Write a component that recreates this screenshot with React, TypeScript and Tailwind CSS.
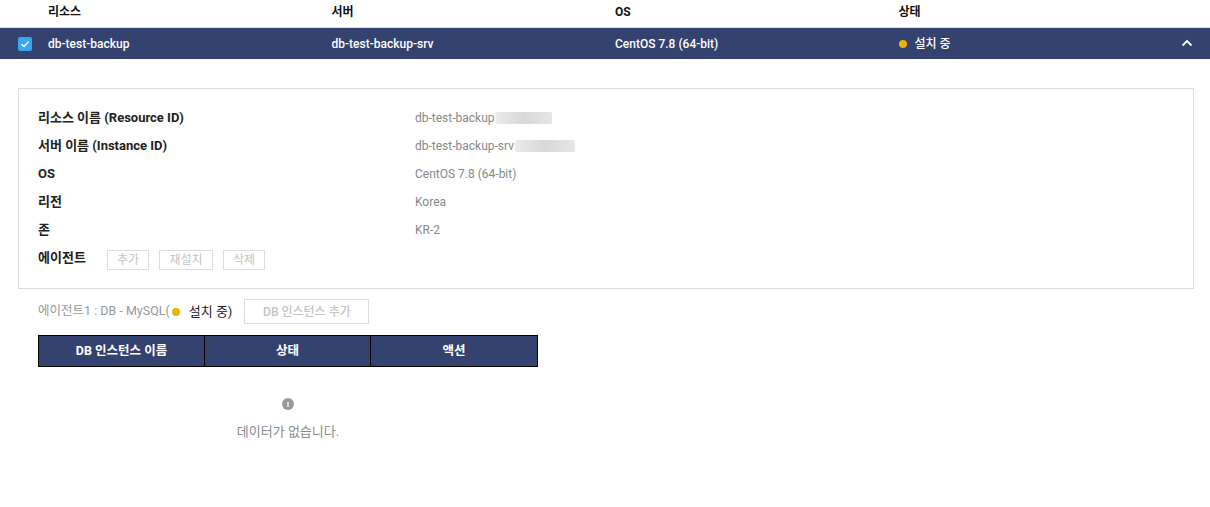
import React from 'react';

const font = { fontFamily: 'Roboto, "Noto Sans CJK KR", sans-serif' };

const details = [
  { label: '리소스 이름 (Resource ID)', value: 'db-test-backup', blur: 'w-[56px]' },
  { label: '서버 이름 (Instance ID)', value: 'db-test-backup-srv', blur: 'w-[60px]' },
  { label: 'OS', value: 'CentOS 7.8 (64-bit)' },
  { label: '리전', value: 'Korea' },
  { label: '존', value: 'KR-2' },
];

const Blurred: React.FC<{ w: string }> = ({ w }) => (
  <span className={`inline-block h-[12px] ${w} ml-[1px] rounded-[2px] bg-gradient-to-r from-[#eceaea] via-[#d9d7d9] to-[#e7e5e7] align-middle`} />
);

export default function App() {
  return (
    <div className="w-[1210px] h-[507px] bg-white text-[13px] text-[#222]" style={font}>
      <div className="h-[28px] border-b border-[#dddddd] grid grid-cols-4 pl-[48px] pr-[28px] items-center font-bold text-[12px] text-[#111] pb-[3px]">
        <div>리소스</div>
        <div>서버</div>
        <div>OS</div>
        <div>상태</div>
      </div>
      <div className="relative h-[31px] bg-[#34426f] text-white grid grid-cols-4 pl-[48px] pr-[28px] items-center font-medium text-[12px]">
        <div className="absolute left-[18px] top-[9px] w-[14px] h-[14px] rounded-[2px] bg-[#3aa6ee] flex items-center justify-center">
          <svg width="10" height="10" viewBox="0 0 10 10" fill="none" stroke="white" strokeWidth="1.3">
            <path d="M1.5 5.2 L4 7.5 L8.6 2.6" />
          </svg>
        </div>
        <div>db-test-backup</div>
        <div>db-test-backup-srv</div>
        <div>CentOS 7.8 (64-bit)</div>
        <div className="flex items-center gap-[8px]">
          <span className="w-[8px] h-[8px] rounded-full bg-[#eab308]" />
          <span>설치 중</span>
        </div>
        <svg className="absolute right-[17px] top-[11px]" width="12" height="8" viewBox="0 0 12 8" fill="none" stroke="white" strokeWidth="1.8">
          <path d="M1.5 6.5 L6 2 L10.5 6.5" />
        </svg>
      </div>

      <div className="mt-[29px] ml-[18px] mr-[16px] h-[201px] border border-[#dddddd] pl-[19px] pt-[15px]">
        {details.map((d) => (
          <div key={d.label} className="h-[28px] flex items-center">
            <div className="w-[377px] font-bold text-[13px] text-[#222]">{d.label}</div>
            <div className="text-[12px] text-[#888] flex items-center">
              {d.value}
              {d.blur && <Blurred w={d.blur} />}
            </div>
          </div>
        ))}
        <div className="h-[28px] flex items-center">
          <div className="font-bold text-[13px] text-[#222] w-[69px]">에이전트</div>
          <div className="flex gap-[10px] mt-[3px]">
            <button className="w-[42px] h-[20px] border border-[#dddddd] text-[12px] text-[#c4c4c4] leading-none">추가</button>
            <button className="w-[54px] h-[20px] border border-[#dddddd] text-[12px] text-[#c4c4c4] leading-none">재설치</button>
            <button className="w-[42px] h-[20px] border border-[#dddddd] text-[12px] text-[#c4c4c4] leading-none">삭제</button>
          </div>
        </div>
      </div>

      <div className="ml-[38px] mt-[10px] flex items-center h-[25px]">
        <span className="text-[12.5px] text-[#999]">에이전트1 : DB - MySQL(</span>
        <span className="w-[8px] h-[8px] rounded-full bg-[#eab308] ml-[2px] mr-[9px]" />
        <span className="text-[13px] text-[#222]">설치 중)</span>
        <button className="ml-[12px] w-[125px] h-[25px] border border-[#dddddd] text-[12px] text-[#c4c4c4] font-medium">DB 인스턴스 추가</button>
      </div>

      <div className="ml-[38px] mt-[11px] w-[500px] h-[32px] bg-[#34426f] border border-black grid grid-cols-3 text-white font-bold text-[12.5px]">
        <div className="flex items-center justify-center border-r border-black">DB 인스턴스 이름</div>
        <div className="flex items-center justify-center border-r border-black">상태</div>
        <div className="flex items-center justify-center">액션</div>
      </div>

      <div className="ml-[38px] w-[500px] flex flex-col items-center pt-[31px]">
        <div className="w-[12px] h-[12px] rounded-full bg-[#9a9a9a] flex items-center justify-center">
          <span className="block w-[1.5px] h-[5px] bg-[#e0e0e0]" />
        </div>
        <div className="mt-[12px] text-[13px] text-[#8a8a8a]">데이터가 없습니다.</div>
      </div>
    </div>
  );
}
